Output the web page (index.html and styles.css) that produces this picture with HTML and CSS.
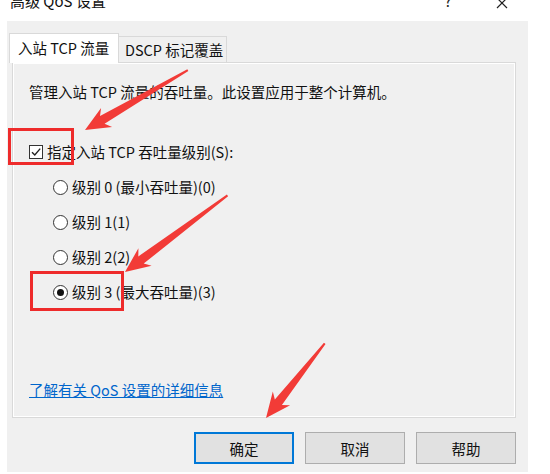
FILE: index.html
```html
<!DOCTYPE html>
<html lang="zh-CN">
<head>
    <meta charset="UTF-8">
    <meta name="viewport" content="width=device-width, initial-scale=1.0">
    <title>高级 QoS 设置</title>
    <link rel="stylesheet" href="styles.css">
</head>
<body>
    <div class="titlebar">
        <span class="title">高级 QoS 设置</span>
        <span class="help">?</span>
        <svg class="close" width="12" height="12" viewBox="0 0 12 12">
            <path d="M1 1 L11 11 M11 1 L1 11" stroke="#222" stroke-width="1.2" fill="none"/>
        </svg>
    </div>

    <div class="dialog">
        <div class="tabs">
            <div class="tab active">入站 TCP 流量</div>
            <div class="tab">DSCP 标记覆盖</div>
        </div>

        <div class="panel">
            <p class="desc">管理入站 TCP 流量的吞吐量。此设置应用于整个计算机。</p>

            <label class="check">
                <span class="box">
                    <svg width="12" height="12" viewBox="0 0 12 12">
                        <path d="M2 6.2 L4.8 9 L10.2 2.6" stroke="#222" stroke-width="1.4" fill="none"/>
                    </svg>
                </span>
                指定入站 TCP 吞吐量级别(S):
            </label>

            <div class="levels">
                <label class="radio"><span class="dot"></span>级别 0 (最小吞吐量)(0)</label>
                <label class="radio"><span class="dot"></span>级别 1(1)</label>
                <label class="radio"><span class="dot"></span>级别 2(2)</label>
                <label class="radio"><span class="dot on"></span>级别 3 (最大吞吐量)(3)</label>
            </div>

            <a class="more" href="#">了解有关 QoS 设置的详细信息</a>
        </div>

        <div class="buttons">
            <button class="btn default">确定</button>
            <button class="btn">取消</button>
            <button class="btn">帮助</button>
        </div>
    </div>

    <!-- red annotations drawn over the dialog -->
    <svg class="marks" width="550" height="474" viewBox="0 0 550 474">
        <rect x="9.5" y="129.5" width="63" height="34" fill="none" stroke="#ee2b2b" stroke-width="3"/>
        <rect x="31.5" y="272.5" width="91" height="37" fill="none" stroke="#ee2b2b" stroke-width="3"/>
        <g fill="#f23b37">
            <polygon transform="translate(85 130) rotate(-30.2)" points="0,0 25,-11 20,-4.5 119,-1 119,1 20,4.5 25,11"/>
            <polygon transform="translate(125 272) rotate(-36.8)" points="0,0 25,-11 20,-4.5 128,-1 128,1 20,4.5 25,11"/>
            <polygon transform="translate(266 418) rotate(-51.8)" points="0,0 25,-11 20,-4.5 95,-1 95,1 20,4.5 25,11"/>
        </g>
    </svg>
</body>
</html>
```

FILE: styles.css
```css
*{
    padding: 0;
    margin: 0;
    box-sizing: border-box;
}
body{
    position: relative;
    width: 550px;
    height: 474px;
    overflow: hidden;
    background-color: #fff;
    font-family: "Noto Sans CJK SC", "Noto Sans", sans-serif;
    font-size: 14.5px;
    color: #111;
}
.titlebar{
    display: flex;
    align-items: flex-start;
    height: 21px;
    padding-left: 10px;
    padding-right: 42px;
}
.title{
    flex: 1;
    font-size: 15px;
    line-height: 20px;
    margin-top: -9px;
}
.help{
    width: 16px;
    text-align: center;
    font-size: 15px;
    line-height: 20px;
    margin-top: -9px;
    margin-right: 40px;
    color: #222;
}
.close{
    margin-top: -3px;
}
.dialog{
    margin-left: 7px;
    width: 521px;
    background-color: #f0f0f0;
    padding: 12px 12px 8px 5px;
}
.tabs{
    display: flex;
    align-items: flex-end;
    margin-left: -3px;
}
.tab{
    height: 26px;
    line-height: 25px;
    padding-left: 6px;
    width: 108px;
    border: 1px solid #d9d9d9;
    border-left: none;
    border-bottom: none;
    white-space: nowrap;
}
.tab.active{
    position: relative;
    z-index: 1;
    width: 110px;
    height: 30px;
    line-height: 28px;
    padding-left: 8px;
    margin-bottom: -1px;
    background-color: #fff;
    border-left: 1px solid #d9d9d9;
}
.panel{
    display: flex;
    flex-direction: column;
    height: 356px;
    border: 1px solid #d9d9d9;
    box-shadow: inset 0 0 0 1px #fff;
    padding: 19px 16px 17px;
}
.desc{
    line-height: 20px;
}
.check, .radio{
    display: flex;
    align-items: center;
    line-height: 20px;
    white-space: nowrap;
}
.check{
    margin-top: 40px;
    gap: 4px;
}
.box{
    width: 14px;
    height: 14px;
    border: 1px solid #333;
    background-color: #fff;
    display: flex;
    justify-content: center;
    align-items: center;
}
.levels{
    display: flex;
    flex-direction: column;
    gap: 15px;
    margin-top: 15px;
    margin-left: 24px;
}
.radio{
    gap: 4px;
}
.dot{
    width: 15px;
    height: 15px;
    border: 1px solid #333;
    border-radius: 50%;
    background-color: #fff;
    display: flex;
    justify-content: center;
    align-items: center;
}
.dot.on::after{
    content: "";
    width: 7px;
    height: 7px;
    border-radius: 50%;
    background-color: #111;
}
.more{
    margin-top: auto;
    line-height: 20px;
    color: #0066cc;
    text-decoration: underline;
    align-self: flex-start;
}
.buttons{
    display: flex;
    justify-content: flex-end;
    gap: 11px;
    margin-top: 14px;
}
.btn{
    width: 100px;
    height: 32px;
    border: 1px solid #adadad;
    background-color: #e1e1e1;
    font-family: inherit;
    font-size: 14.5px;
    color: #111;
}
.btn.default{
    border: 2px solid #0078d7;
}
.marks{
    position: absolute;
    top: 0;
    left: 0;
    pointer-events: none;
}
```
